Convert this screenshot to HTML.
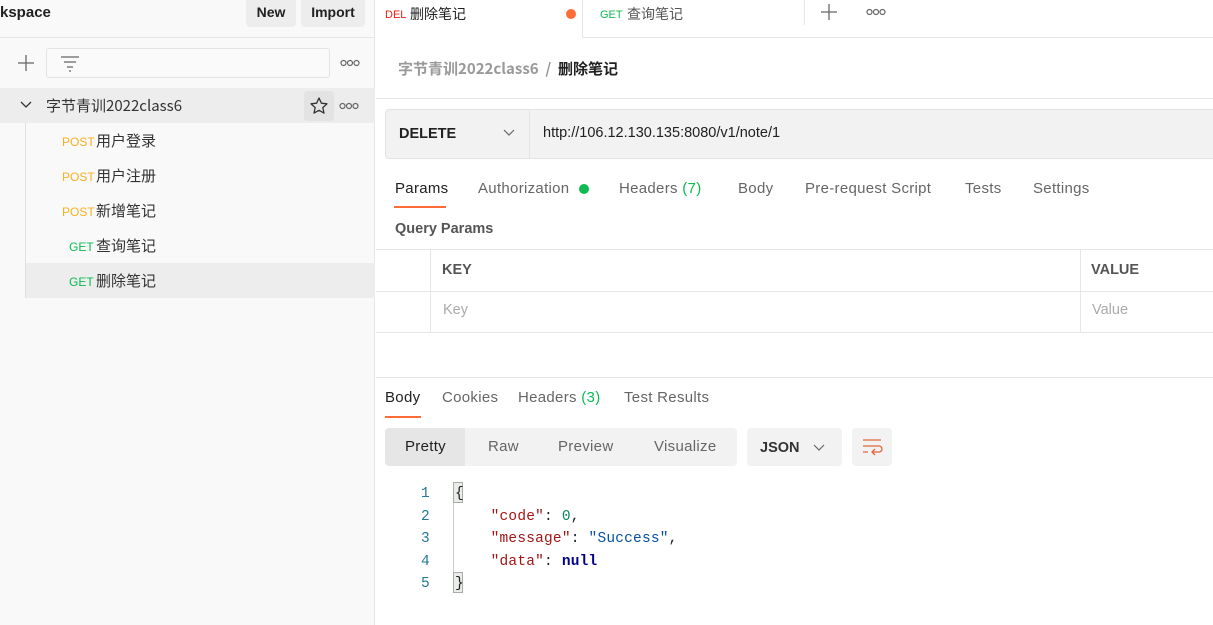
<!DOCTYPE html><html><head><meta charset="utf-8"><style>
*{margin:0;padding:0;box-sizing:border-box}
body{width:1213px;height:625px;overflow:hidden;background:#fff;font-family:"Liberation Sans","Noto Sans CJK SC",sans-serif;font-size:14px;color:#212121;position:relative}
.a{position:absolute;white-space:nowrap}
.cj{font-family:"Noto Sans CJK SC",sans-serif}
.mono{font-family:"Liberation Mono","DejaVu Sans Mono",monospace;font-size:14.5px}
.t{font-size:15px;letter-spacing:0.3px}
</style></head><body>
<!-- sidebar -->
<div class="a" style="left:0;top:0;width:375px;height:625px;background:#f9f9f9;border-right:1px solid #e6e6e6"></div>
<div class="a" style="left:0;top:37px;width:375px;height:1px;background:#e6e6e6"></div>
<div class="a" style="left:0;top:4px;font-size:15px;font-weight:bold">kspace</div>
<div class="a" style="left:246px;top:0;width:50px;height:27px;background:#ededed;border-radius:0 0 4px 4px;text-align:center;line-height:25px;font-weight:bold">New</div>
<div class="a" style="left:301px;top:0;width:64px;height:27px;background:#ededed;border-radius:0 0 4px 4px;text-align:center;line-height:25px;font-weight:bold">Import</div>
<svg class="a" style="left:17px;top:54px" width="18" height="18"><path d="M9 1v16M1 9h16" stroke="#666" stroke-width="1.3"/></svg>
<div class="a" style="left:46px;top:48px;width:284px;height:30px;border:1px solid #e3e3e3;background:#fafafa;border-radius:3px"></div>
<svg class="a" style="left:60px;top:54px" width="20" height="18"><path d="M1 3h18M4 8h12M7 13h6M9 17h2" stroke="#666" stroke-width="1.3"/></svg>
<svg class="a" style="left:340px;top:59px" width="20" height="8"><g fill="none" stroke="#666" stroke-width="1.2"><circle cx="3.5" cy="4" r="2.5"/><circle cx="10" cy="4" r="2.5"/><circle cx="16.5" cy="4" r="2.5"/></g></svg>
<div class="a" style="left:0;top:88px;width:375px;height:35px;background:#ededed"></div>
<svg class="a" style="left:20px;top:100px" width="12" height="10"><path d="M1 2l5 5 5-5" stroke="#333" fill="none" stroke-width="1.3"/></svg>
<div class="a cj" style="left:46px;top:95px;font-size:15px;color:#333">字节青训2022class6</div>
<div class="a" style="left:304px;top:91px;width:30px;height:30px;background:#e3e3e3;border-radius:3px"></div>
<svg class="a" style="left:309px;top:96px" width="20" height="20"><path d="M10 2l2.4 5.2 5.6.6-4.2 3.8 1.2 5.5L10 14.3 5 17.1l1.2-5.5L2 7.8l5.6-.6z" stroke="#333" fill="none" stroke-width="1.3" stroke-linejoin="round"/></svg>
<svg class="a" style="left:339px;top:102px" width="20" height="8"><g fill="none" stroke="#666" stroke-width="1.2"><circle cx="3.5" cy="4" r="2.5"/><circle cx="10" cy="4" r="2.5"/><circle cx="16.5" cy="4" r="2.5"/></g></svg>
<div class="a" style="left:25px;top:123px;width:1px;height:175px;background:#e0e0e0"></div>
<div class="a" style="left:26px;top:263px;width:349px;height:35px;background:#ededed"></div>
<div class="a" style="left:62px;top:135px;font-size:12px;color:#f6b01e">POST</div><div class="a cj" style="left:96px;top:130px;font-size:15px;color:#333">用户登录</div>
<div class="a" style="left:62px;top:170px;font-size:12px;color:#f6b01e">POST</div><div class="a cj" style="left:96px;top:165px;font-size:15px;color:#333">用户注册</div>
<div class="a" style="left:62px;top:205px;font-size:12px;color:#f6b01e">POST</div><div class="a cj" style="left:96px;top:200px;font-size:15px;color:#333">新增笔记</div>
<div class="a" style="left:69px;top:240px;font-size:12px;color:#0cbb52">GET</div><div class="a cj" style="left:96px;top:235px;font-size:15px;color:#333">查询笔记</div>
<div class="a" style="left:69px;top:275px;font-size:12px;color:#0cbb52">GET</div><div class="a cj" style="left:96px;top:270px;font-size:15px;color:#333">删除笔记</div>
<!-- tabs -->
<div class="a" style="left:582px;top:0;width:1px;height:37px;background:#e6e6e6"></div>
<div class="a" style="left:582px;top:37px;width:631px;height:1px;background:#e6e6e6"></div>
<div class="a" style="left:804px;top:0;width:1px;height:25px;background:#e6e6e6"></div>
<div class="a" style="left:385px;top:9px;font-size:11px;color:#eb2013">DEL</div><div class="a cj" style="left:410px;top:4px;font-size:14px">删除笔记</div>
<div class="a" style="left:566px;top:9px;width:10px;height:10px;border-radius:50%;background:#ff6c37"></div>
<div class="a" style="left:600px;top:9px;font-size:11px;color:#0cbb52">GET</div><div class="a cj" style="left:627px;top:4px;font-size:14px;color:#555">查询笔记</div>
<svg class="a" style="left:821px;top:4px" width="16" height="16"><path d="M8 0v16M0 8h16" stroke="#666" stroke-width="1.3"/></svg>
<svg class="a" style="left:866px;top:8px" width="20" height="8"><g fill="none" stroke="#666" stroke-width="1.2"><circle cx="3.5" cy="4" r="2.5"/><circle cx="10" cy="4" r="2.5"/><circle cx="16.5" cy="4" r="2.5"/></g></svg>
<div class="a cj" style="left:398px;top:58px;font-size:15px;font-weight:bold;color:#999">字节青训2022class6 &nbsp;/&nbsp; <span style="color:#212121">删除笔记</span></div>
<div class="a" style="left:376px;top:98px;width:837px;height:1px;background:#e6e6e6"></div>
<!-- url bar -->
<div class="a" style="left:385px;top:109px;width:840px;height:50px;background:#f2f2f2;border:1px solid #e3e3e3;border-radius:4px"></div>
<div class="a" style="left:529px;top:110px;width:1px;height:48px;background:#e3e3e3"></div>
<div class="a" style="left:399px;top:126px;font-weight:bold;font-size:14.5px">DELETE</div>
<svg class="a" style="left:503px;top:129px" width="12" height="8"><path d="M1 1l5 5 5-5" stroke="#666" fill="none" stroke-width="1.2"/></svg>
<div class="a" style="left:543px;top:125px;font-size:14.5px">http://106.12.130.135:8080/v1/note/1</div>
<!-- req tabs -->
<div class="a t" style="left:395px;top:180px;color:#212121">Params</div>
<div class="a" style="left:394px;top:206px;width:52px;height:2px;background:#ff6c37"></div>
<div class="a t" style="left:478px;top:180px;color:#666">Authorization</div>
<div class="a" style="left:579px;top:184px;width:10px;height:10px;border-radius:50%;background:#0cbb52"></div>
<div class="a t" style="left:619px;top:180px;color:#666">Headers <span style="color:#0cbb52">(7)</span></div>
<div class="a t" style="left:738px;top:180px;color:#666">Body</div>
<div class="a t" style="left:805px;top:180px;color:#666">Pre-request Script</div>
<div class="a t" style="left:965px;top:180px;color:#666">Tests</div>
<div class="a t" style="left:1033px;top:180px;color:#666">Settings</div>
<div class="a" style="left:395px;top:221px;font-size:14.5px;font-weight:bold;color:#555">Query Params</div>
<!-- table -->
<div class="a" style="left:376px;top:249px;width:837px;height:1px;background:#e6e6e6"></div>
<div class="a" style="left:376px;top:291px;width:837px;height:1px;background:#e6e6e6"></div>
<div class="a" style="left:376px;top:332px;width:837px;height:1px;background:#e6e6e6"></div>
<div class="a" style="left:430px;top:249px;width:1px;height:84px;background:#e6e6e6"></div>
<div class="a" style="left:1080px;top:249px;width:1px;height:84px;background:#e6e6e6"></div>
<div class="a" style="left:442px;top:262px;font-size:14.5px;font-weight:bold;color:#555">KEY</div>
<div class="a" style="left:1091px;top:262px;font-size:14.5px;font-weight:bold;color:#555">VALUE</div>
<div class="a" style="left:443px;top:302px;font-size:14.5px;color:#aaa">Key</div>
<div class="a" style="left:1092px;top:302px;font-size:14.5px;color:#aaa">Value</div>
<div class="a" style="left:376px;top:377px;width:837px;height:1px;background:#e6e6e6"></div>
<!-- response -->
<div class="a t" style="left:385px;top:389px;color:#212121">Body</div>
<div class="a" style="left:385px;top:416px;width:36px;height:2px;background:#ff6c37"></div>
<div class="a t" style="left:442px;top:389px;color:#666">Cookies</div>
<div class="a t" style="left:518px;top:389px;color:#666">Headers <span style="color:#0cbb52">(3)</span></div>
<div class="a t" style="left:624px;top:389px;color:#666">Test Results</div>
<div class="a" style="left:385px;top:428px;width:352px;height:38px;background:#f2f2f2;border-radius:4px"></div>
<div class="a" style="left:385px;top:428px;width:80px;height:38px;background:#e6e6e6;border-radius:4px 0 0 4px"></div>
<div class="a t" style="left:405px;top:438px;color:#212121">Pretty</div>
<div class="a t" style="left:488px;top:438px;color:#666">Raw</div>
<div class="a t" style="left:558px;top:438px;color:#666">Preview</div>
<div class="a t" style="left:654px;top:438px;color:#666">Visualize</div>
<div class="a" style="left:747px;top:428px;width:95px;height:38px;background:#f2f2f2;border-radius:4px"></div>
<div class="a" style="left:760px;top:440px;font-size:14.5px;font-weight:bold;color:#333">JSON</div>
<svg class="a" style="left:813px;top:444px" width="12" height="8"><path d="M1 1l5 5 5-5" stroke="#666" fill="none" stroke-width="1.2"/></svg>
<div class="a" style="left:852px;top:428px;width:40px;height:38px;background:#f2f2f2;border-radius:4px"></div>
<svg class="a" style="left:861px;top:438px" width="22" height="18"><path d="M2 2h18M2 8h16a3 3 0 0 1 0 6h-6M14 11l-3 3 3 3M2 14h5" stroke="#e0673b" fill="none" stroke-width="1.3"/></svg>
<!-- code -->
<div class="a" style="left:453px;top:483px;width:1px;height:106px;background:#ccc"></div>
<div class="a mono" style="left:421px;top:483px;line-height:22.5px;color:#237893;text-align:right">1<br>2<br>3<br>4<br>5</div>
<div class="a" style="left:453px;top:482px;width:10px;height:21px;border:1px solid #aaa;background:#e8ede8"></div>
<div class="a" style="left:453px;top:572px;width:10px;height:21px;border:1px solid #aaa;background:#e8ede8"></div>
<div class="a mono" style="left:455px;top:483px;line-height:22.5px;color:#212121;white-space:pre;letter-spacing:0.2px">{
    <span style="color:#a31515">"code"</span>: <span style="color:#098658">0</span>,
    <span style="color:#a31515">"message"</span>: <span style="color:#0451a5">"Success"</span>,
    <span style="color:#a31515">"data"</span>: <span style="font-weight:bold;color:#00008b">null</span>
}</div>
</body></html>
